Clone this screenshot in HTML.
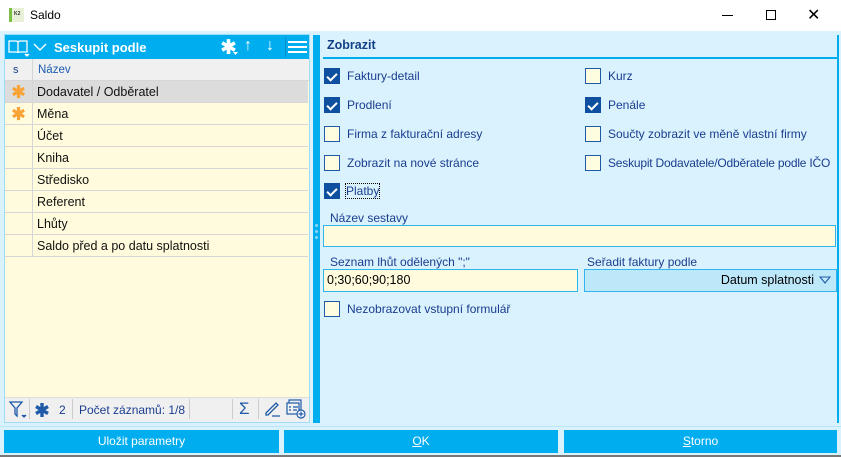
<!DOCTYPE html><html><head><meta charset="utf-8"><style>
*{margin:0;padding:0;box-sizing:border-box}
body{width:841px;height:457px;overflow:hidden;background:#d9f2fd;font-family:"Liberation Sans",sans-serif;font-size:12px;position:relative}
.a{position:absolute}
.cb{position:absolute;width:16px;height:16px;border:1px solid #1e5aa8;background:#fffde0}
.cb.on{background:#0f4fa0;border-color:#0f4fa0}
.cb.on:after{content:"";position:absolute;left:4px;top:2px;width:4px;height:8px;border:solid #fff;border-width:0 2px 2px 0;transform:rotate(45deg)}
.lb{position:absolute;color:#1a3d8f;font-size:12px}
.row{position:absolute;left:5px;width:303px;height:22px;border-bottom:1px solid #d6d6d6;background:#fffbdc;color:#111;font-size:12.5px}
.row span{position:absolute;left:32px;top:4px}
.row:before{content:"";position:absolute;left:27px;top:0;bottom:0;border-left:1px solid #d6d6d6}
.st{position:absolute;left:6px;top:3px}
.btn{position:absolute;top:430px;height:23px;background:#00adef;color:#fff;text-align:center;line-height:23px;font-size:12px}
</style></head><body>
<svg width="0" height="0" style="position:absolute"><defs><symbol id="ast" viewBox="0 0 16 16"><g stroke-width="3.4" stroke-linecap="butt"><path d="M8 1v14M2 4.5l12 7M2 11.5l12-7"/></g></symbol></defs></svg>
<div class="a" style="left:0;top:0;width:841px;height:31px;background:#fff"></div>
<div class="a" style="left:9px;top:8px;width:15px;height:14px;background:#e8f0d8;border-left:3px solid #7bc043;font-size:5px;font-weight:bold;color:#333;padding:3px 0 0 2px">K2</div>
<div class="a" style="left:30px;top:8px;font-size:12px;color:#000">Saldo</div>
<div class="a" style="left:722px;top:15px;width:11px;height:1px;background:#000"></div>
<div class="a" style="left:766px;top:10px;width:10px;height:10px;border:1px solid #000"></div>
<div class="a" style="left:807px;top:5px;font-size:16px;color:#000">✕</div>
<div class="a" style="left:0;top:455px;width:841px;height:2px;background:#777"></div>

<div class="a" style="left:4px;top:34px;width:306px;height:389px;border:1px solid #9fdcf5;background:#fffbdc"></div>
<div class="a" style="left:5px;top:35px;width:304px;height:24px;background:#00adef"></div>
<svg class="a" style="left:8px;top:39px" width="22" height="18" viewBox="0 0 22 18" fill="none" stroke="#fff" stroke-width="1.3"><path d="M1 2h7q2 0 2 2v10q0-1-2-1H1z M19 2h-7q-2 0-2 2v10q0-1 2-1h7z"/><path d="M17 15l2 2 2-2" fill="#fff"/></svg>
<svg class="a" style="left:33px;top:42px" width="14" height="10"><path d="M1 2l6 6 6-6" stroke="#fff" fill="none" stroke-width="1.4"/></svg>
<div class="a" style="left:54px;top:40px;color:#fff;font-weight:bold;font-size:13px">Seskupit podle</div>
<svg class="a" style="left:220px;top:38px;stroke:#fff" width="17" height="17"><use href="#ast"/></svg>
<svg class="a" style="left:233px;top:52px" width="5" height="4"><path d="M0 0h5L2.5 3z" fill="#fff"/></svg>
<div class="a" style="left:244px;top:37px;color:#fff;font-size:16px">↑</div>
<div class="a" style="left:266px;top:37px;color:#fff;font-size:16px">↓</div>
<div class="a" style="left:285px;top:37px;width:1px;height:20px;background:#0a8cc8"></div>
<div class="a" style="left:288px;top:41px;width:19px;height:2px;background:#fff;box-shadow:0 5px 0 #fff,0 10px 0 #fff"></div>
<div class="a" style="left:5px;top:59px;width:304px;height:22px;background:#f0f0f0;border-bottom:1px solid #d6d6d6"></div>
<div class="a" style="left:32px;top:59px;width:1px;height:22px;background:#d6d6d6"></div>
<div class="a" style="left:13px;top:64px;color:#1a3d8f;font-size:11px">s</div>
<div class="a" style="left:38px;top:64px;color:#1a5ab0;font-size:11.5px">Název</div>
<div class="row" style="top:81px;background:#dcdcdc"><svg class="st" width="15" height="15" style="stroke:#f7a335"><use href="#ast"/></svg><span>Dodavatel / Odběratel</span></div>
<div class="row" style="top:103px"><svg class="st" width="15" height="15" style="stroke:#f7a335"><use href="#ast"/></svg><span>Měna</span></div>
<div class="row" style="top:125px"><span>Účet</span></div>
<div class="row" style="top:147px"><span>Kniha</span></div>
<div class="row" style="top:169px"><span>Středisko</span></div>
<div class="row" style="top:191px"><span>Referent</span></div>
<div class="row" style="top:213px"><span>Lhůty</span></div>
<div class="row" style="top:235px"><span>Saldo před a po datu splatnosti</span></div>
<div class="a" style="left:5px;top:397px;width:304px;height:25px;background:#f0f0f0;border-top:1px solid #ddd"></div>
<svg class="a" style="left:9px;top:401px" width="18" height="18" fill="none" stroke="#1e5aa8" stroke-width="1.3"><path d="M1 1h12l-5 6v8l-2-2V7z"/><path d="M13 14l2 2 2-2" fill="#1e5aa8"/></svg>
<div class="a" style="left:29px;top:399px;width:1px;height:20px;background:#ccc"></div>
<svg class="a" style="left:34px;top:402px;stroke:#1e5aa8" width="16" height="16"><use href="#ast"/></svg>
<div class="a" style="left:59px;top:403px;color:#1a3d8f">2</div>
<div class="a" style="left:72px;top:399px;width:1px;height:20px;background:#ccc"></div>
<div class="a" style="left:79px;top:403px;color:#1a3d8f">Počet záznamů: 1/8</div>
<div class="a" style="left:189px;top:399px;width:1px;height:20px;background:#ccc"></div>
<div class="a" style="left:232px;top:399px;width:1px;height:20px;background:#ccc"></div>
<div class="a" style="left:239px;top:399px;color:#1e5aa8;font-size:17px">Σ</div>
<div class="a" style="left:258px;top:399px;width:1px;height:20px;background:#ccc"></div>
<svg class="a" style="left:263px;top:400px" width="18" height="18" fill="none" stroke="#1e5aa8" stroke-width="1.3"><path d="M3 13L13 3l2 2L5 15H3z M9 16h8"/></svg>
<svg class="a" style="left:286px;top:399px" width="20" height="20" fill="none" stroke="#1e5aa8" stroke-width="1.2"><rect x="3" y="1" width="12" height="10"/><rect x="1" y="4" width="12" height="11" fill="#f0f0f0"/><path d="M3 8h2M7 8h5M3 11h2M7 11h4"/><circle cx="15" cy="15" r="4" fill="#fff"/><path d="M15 12.5v5M12.5 15h5"/></svg>

<div class="a" style="left:313px;top:35px;width:7px;height:388px;background:#00adef"></div>
<div class="a" style="left:315px;top:224px;width:3px;height:3px;border-radius:2px;background:#8fd8f7;box-shadow:0 6px 0 #8fd8f7,0 12px 0 #8fd8f7"></div>

<div class="a" style="left:837px;top:35px;width:2px;height:388px;background:#00adef"></div>
<div class="a" style="left:327px;top:38px;color:#123f85;font-weight:bold;font-size:12.5px">Zobrazit</div>
<div class="a" style="left:323px;top:57px;width:514px;height:2px;background:#00adef"></div>
<div class="cb on" style="left:324px;top:68px"></div><div class="lb" style="left:347px;top:69px">Faktury-detail</div>
<div class="cb on" style="left:324px;top:97px"></div><div class="lb" style="left:347px;top:98px">Prodlení</div>
<div class="cb" style="left:324px;top:126px"></div><div class="lb" style="left:347px;top:127px">Firma z fakturační adresy</div>
<div class="cb" style="left:324px;top:155px"></div><div class="lb" style="left:347px;top:156px">Zobrazit na nové stránce</div>
<div class="cb on" style="left:324px;top:183px"></div><div class="lb" style="left:346px;top:184px;outline:1px dotted #000">Platby</div>
<div class="cb" style="left:585px;top:68px"></div><div class="lb" style="left:608px;top:69px">Kurz</div>
<div class="cb on" style="left:585px;top:97px"></div><div class="lb" style="left:608px;top:98px">Penále</div>
<div class="cb" style="left:585px;top:126px"></div><div class="lb" style="left:608px;top:127px">Součty zobrazit ve měně vlastní firmy</div>
<div class="cb" style="left:585px;top:155px"></div><div class="lb" style="left:608px;top:156px;letter-spacing:-0.2px">Seskupit Dodavatele/Odběratele podle IČO</div>
<div class="lb" style="left:330px;top:211px">Název sestavy</div>
<div class="a" style="left:323px;top:225px;width:513px;height:22px;border:1px solid #2fb4ec;background:#fffbdc"></div>
<div class="lb" style="left:330px;top:255px">Seznam lhůt odělených ";"</div>
<div class="a" style="left:323px;top:269px;width:255px;height:23px;border:1px solid #2fb4ec;background:#fffbdc;color:#000;padding:3px 0 0 3px;font-size:12.5px">0;30;60;90;180</div>
<div class="lb" style="left:587px;top:255px">Seřadit faktury podle</div>
<div class="a" style="left:584px;top:269px;width:253px;height:23px;border:1px solid #2fb4ec;background:#bde8fa;color:#000;text-align:right;padding:3px 22px 0 0;font-size:12.5px">Datum splatnosti</div>
<svg class="a" style="left:819px;top:276px" width="12" height="9" fill="none" stroke="#1e5aa8" stroke-width="1.1"><path d="M1 1h10L6 7z"/></svg>
<div class="cb" style="left:324px;top:301px"></div><div class="lb" style="left:347px;top:302px">Nezobrazovat vstupní formulář</div>

<div class="a" style="left:0;top:426px;width:841px;height:1px;background:#b8e6f8"></div>
<div class="btn" style="left:4px;width:275px">Uložit parametry</div>
<div class="btn" style="left:284px;width:274px"><u>O</u>K</div>
<div class="btn" style="left:564px;width:273px"><u>S</u>torno</div>
</body></html>
